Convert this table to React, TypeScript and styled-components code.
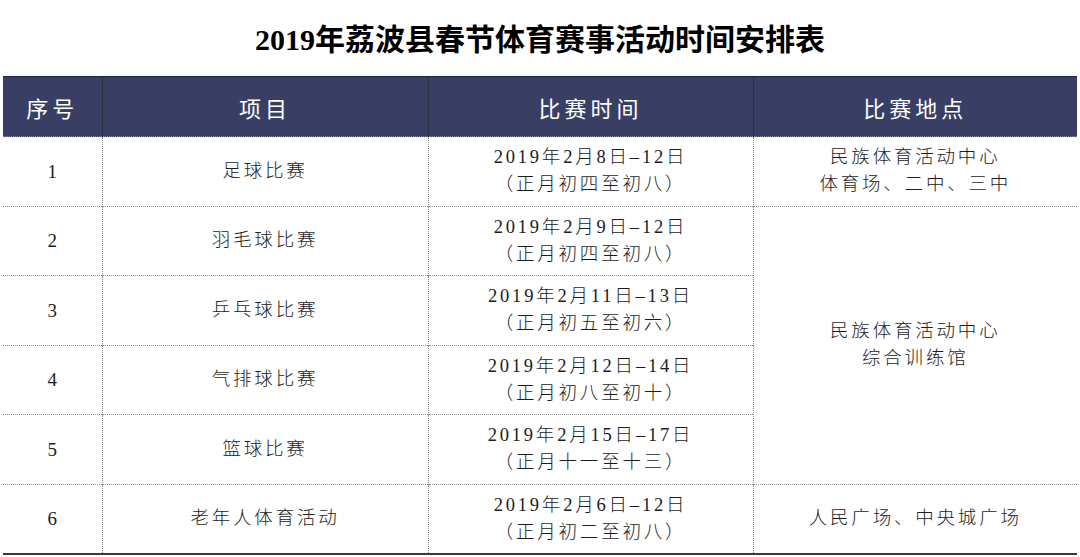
import styled, { createGlobalStyle } from "styled-components";

const GlobalStyle = createGlobalStyle`
  html, body {
    margin: 0;
    padding: 0;
    background: #fff;
  }
  body {
    font-family: "Liberation Serif", "Noto Sans CJK SC", serif;
  }
`;

const Page = styled.div`
  width: 1080px;
  height: 557px;
  overflow: hidden;
  display: flex;
  flex-direction: column;
`;

const Title = styled.h1`
  margin: 0;
  height: 76px;
  padding-bottom: 3px;
  box-sizing: border-box;
  display: flex;
  align-items: center;
  justify-content: center;
  font-size: 30px;
  font-weight: 700;
  color: #000;
`;

const Table = styled.table`
  width: 1074px;
  margin-left: 3px;
  border-collapse: collapse;
  table-layout: fixed;
`;

const HeadCell = styled.th<{ $first?: boolean }>`
  height: 59px;
  padding: 0;
  background: #393e64;
  border-top: 1px solid #23263f;
  border-left: ${(p) => (p.$first ? "none" : "1px dotted #1e2035")};
  color: #fff;
  font-family: "Noto Sans CJK SC", sans-serif;
  font-size: 22px;
  font-weight: 400;
  letter-spacing: 4px;
  text-align: center;
`;

const Row = styled.tr<{ $last?: boolean }>`
  height: 69.5px;
  border-bottom: ${(p) => (p.$last ? "2px solid #3a3a3a" : "none")};
`;

const Cell = styled.td<{ $first?: boolean }>`
  padding: 0;
  border-top: 1px dotted #8a8a8a;
  border-left: ${(p) => (p.$first ? "none" : "1px dotted #8a8a8a")};
  text-align: center;
  vertical-align: middle;
  color: #1c1c1c;
  font-size: 18.5px;
  font-weight: 300;
  letter-spacing: 2.8px;
  line-height: 27px;
`;

const NumCell = styled(Cell)`
  font-size: 19px;
  letter-spacing: 0;
`;

const Line = styled.div``;

type Item = {
  no: number;
  name: string;
  date: [string, string];
  place?: string[];
  span?: number;
};

const items: Item[] = [
  {
    no: 1,
    name: "足球比赛",
    date: ["2019年2月8日–12日", "（正月初四至初八）"],
    place: ["民族体育活动中心", "体育场、二中、三中"],
  },
  {
    no: 2,
    name: "羽毛球比赛",
    date: ["2019年2月9日–12日", "（正月初四至初八）"],
    place: ["民族体育活动中心", "综合训练馆"],
    span: 4,
  },
  {
    no: 3,
    name: "乒乓球比赛",
    date: ["2019年2月11日–13日", "（正月初五至初六）"],
  },
  {
    no: 4,
    name: "气排球比赛",
    date: ["2019年2月12日–14日", "（正月初八至初十）"],
  },
  {
    no: 5,
    name: "篮球比赛",
    date: ["2019年2月15日–17日", "（正月十一至十三）"],
  },
  {
    no: 6,
    name: "老年人体育活动",
    date: ["2019年2月6日–12日", "（正月初二至初八）"],
    place: ["人民广场、中央城广场"],
  },
];

export default function App() {
  return (
    <Page>
      <GlobalStyle />
      <Title>2019年荔波县春节体育赛事活动时间安排表</Title>
      <Table>
        <colgroup>
          <col style={{ width: 99 }} />
          <col style={{ width: 326 }} />
          <col style={{ width: 325 }} />
          <col style={{ width: 324 }} />
        </colgroup>
        <thead>
          <tr>
            <HeadCell $first>序号</HeadCell>
            <HeadCell>项目</HeadCell>
            <HeadCell>比赛时间</HeadCell>
            <HeadCell>比赛地点</HeadCell>
          </tr>
        </thead>
        <tbody>
          {items.map((item, i) => (
            <Row key={item.no} $last={i === items.length - 1}>
              <NumCell $first>{item.no}</NumCell>
              <Cell>{item.name}</Cell>
              <Cell>
                {item.date.map((d) => (
                  <Line key={d}>{d}</Line>
                ))}
              </Cell>
              {item.place && (
                <Cell rowSpan={item.span || 1}>
                  {item.place.map((p) => (
                    <Line key={p}>{p}</Line>
                  ))}
                </Cell>
              )}
            </Row>
          ))}
        </tbody>
      </Table>
    </Page>
  );
}
